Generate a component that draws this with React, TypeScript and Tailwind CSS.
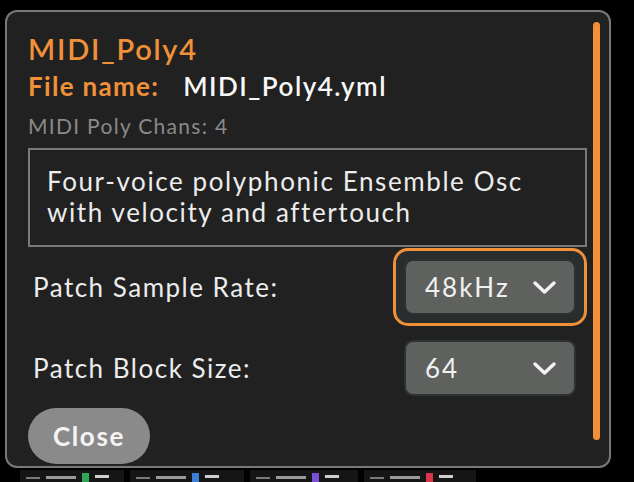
import React from "react";

function Chevron() {
  return (
    <svg width="25" height="15" viewBox="0 0 25 15" fill="none">
      <path d="M3 3 L12.5 12 L22 3" stroke="#f2f2f2" strokeWidth="3.5" strokeLinecap="round" strokeLinejoin="round" />
    </svg>
  );
}

function Select({ value, focused }: { value: string; focused?: boolean }) {
  return (
    <div
      className={
        focused
          ? "rounded-[15px] border-[3px] border-[#f0913a] bg-[#292d2d] px-[8px] py-[8px]"
          : "rounded-[15px] border-[3px] border-transparent px-[8px] py-[8px]"
      }
    >
      <div className="flex h-[56px] w-[172px] items-center justify-between rounded-[9px] border-2 border-[#2c3131] bg-[#5f615f] pl-[19px] pr-[17px]">
        <span className="text-[26px] leading-[30px] tracking-[2px] text-[#f0f0f0]">{value}</span>
        <Chevron />
      </div>
    </div>
  );
}

function StripBlock({ color, w }: { color: string; w: number }) {
  return (
    <div className="flex h-[12px] items-end gap-[6px] bg-[#151515] px-[6px]" style={{ width: w }}>
      <div className="mb-[3px] h-[2px] w-[14px] bg-[#7a7a7a]" />
      <div className="mb-[3px] h-[3px] w-[30px] bg-[#9a9a9a]" />
      <div className="h-[9px] w-[7px]" style={{ background: color }} />
      <div className="mb-[4px] h-[3px] w-[14px] bg-[#cfcfcf]" />
    </div>
  );
}

export default function App() {
  return (
    <div className="h-[482px] w-[634px] overflow-hidden bg-black font-[Lato,'Noto_Sans',sans-serif]">
      <div className="pl-[5px] pt-[10px]">
        <div className="flex h-[458px] w-[606px] overflow-hidden rounded-[12px] border-2 border-[#797979] bg-[#212121]">
          <div className="w-[580px] shrink-0 pl-[21px] pt-[20px]">
            <div className="text-[29px] font-semibold leading-[34px] tracking-[1.8px] text-[#f0913a]">MIDI_Poly4</div>
            <div className="mt-[5px] flex text-[26px] leading-[31px]">
              <span className="font-bold tracking-[1.3px] text-[#f0913a]">File name:</span>
              <span className="ml-[24px] font-semibold tracking-[1.5px] text-[#f7f7f7]">MIDI_Poly4.yml</span>
            </div>
            <div className="mt-[12px] text-[21px] leading-[24px] tracking-[1.3px] text-[#8a8a8a]">MIDI Poly Chans: 4</div>
            <div className="mt-[10px] h-[99px] w-[559px] border-2 border-[#7a7a7a] pl-[17px] pt-[16px] text-[26px] leading-[31px] tracking-[1.6px] text-[#ececec]">
              <div>Four-voice polyphonic Ensemble Osc</div>
              <div>with velocity and aftertouch</div>
            </div>
            <div className="mt-[1px] flex items-center justify-between">
              <span className="pl-[5px] text-[26px] leading-[30px] tracking-[1.5px] text-[#ececec]">Patch Sample Rate:</span>
              <Select value="48kHz" focused />
            </div>
            <div className="mt-[3px] flex items-center justify-between">
              <span className="pl-[5px] text-[26px] leading-[30px] tracking-[1.5px] text-[#ececec]">Patch Block Size:</span>
              <Select value="64" />
            </div>
            <div className="mt-[1px] flex h-[56px] w-[122px] items-center rounded-full bg-[#8a8a8a] pl-[25px]">
              <span className="text-[26px] font-bold leading-[30px] tracking-[1.6px] text-[#f4f4f4]">Close</span>
            </div>
          </div>
          <div className="pl-[6px] pt-[10px]">
            <div className="h-[418px] w-[7px] rounded-full bg-[#f0913a]" />
          </div>
        </div>
        <div className="mt-[2px] flex gap-[6px] pl-[15px]">
          <StripBlock color="#2fa55a" w={104} />
          <StripBlock color="#3b7fd6" w={114} />
          <StripBlock color="#7b4fd8" w={108} />
          <StripBlock color="#d8344a" w={112} />
        </div>
      </div>
    </div>
  );
}
